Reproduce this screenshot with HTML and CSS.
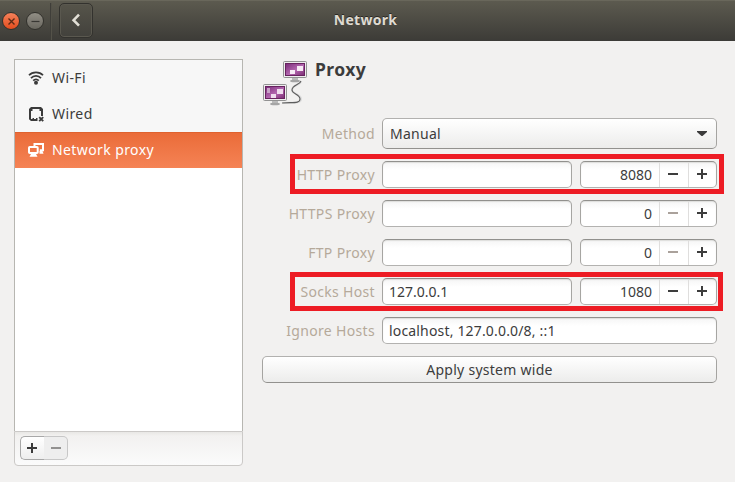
FILE: index.html
```html
<!DOCTYPE html>
<html lang="en">
<head>
<meta charset="utf-8">
<title>Network</title>
<link rel="stylesheet" href="styles.css">
</head>
<body>
<header class="titlebar">
  <div class="controls">
    <span class="wm close"><svg width="17" height="17" viewBox="0 0 17 17"><path d="M5.5 5.5l6 6m0-6l-6 6" stroke="#5b2a15" stroke-width="1.4"/></svg></span>
    <span class="wm minimize"><svg width="17" height="17" viewBox="0 0 17 17"><path d="M4.5 8.5h8" stroke="#383733" stroke-width="1.2"/></svg></span>
    <span class="divider"></span>
    <button class="back" aria-label="Back"><svg width="32" height="32" viewBox="0 0 32 32"><path d="M19 9.7l-5.4 5.5 5.4 5.5" fill="none" stroke="#e2dfd6" stroke-width="2.6"/></svg></button>
  </div>
  <h1>Network</h1>
</header>
<main class="content">
  <aside class="sidebar">
    <ul class="devices">
      <li><svg class="dev-icon" viewBox="0 0 16 16"><g fill="none" stroke="#3b3b3b" stroke-width="1.7"><path d="M1 5.3C4.5 1.3 11.5 1.3 15 5.3"/><path d="M3 8.1c2.7-3 7.3-3 10 0"/><path d="M5.2 10.6c1.7-1.7 3.9-1.7 5.6 0"/></g><circle cx="8" cy="12.8" r="2" fill="#3b3b3b"/></svg><span>Wi-Fi</span></li>
      <li><svg class="dev-icon" viewBox="0 0 16 16"><path d="M9.5 15H3L1 13.2V3L3 1h10l2 2v7h-2V5h-1.5V3h-7v2H3v8h1.5v-1H6v1h2v-1h1.5z" fill="#3b3b3b"/><path d="M11.2 11.2l4 4m0-4l-4 4" stroke="#3b3b3b" stroke-width="1.9"/></svg><span>Wired</span></li>
      <li class="selected"><svg class="dev-icon" viewBox="0 0 16 16"><path d="M6.5 4V2H15v6.3h-3.2" fill="none" stroke="#fff" stroke-width="2"/><path d="M11.5 9h3l1 2.7h-4z" fill="#fff"/><rect x="1" y="5" width="8.7" height="6" rx=".8" fill="none" stroke="#fff" stroke-width="2"/><path d="M3 12h5l1.5 2.7h-8z" fill="#fff"/></svg><span>Network proxy</span></li>
    </ul>
    <div class="toolbar">
      <div class="linked">
        <button class="add" aria-label="Add"><svg width="12" height="12" viewBox="0 0 12 12"><path d="M1 6h10M6 1v10" stroke="#3b3b3b" stroke-width="2"/></svg></button>
        <button class="remove" aria-label="Remove"><svg width="12" height="12" viewBox="0 0 12 12"><path d="M1 6h10" stroke="#929190" stroke-width="2"/></svg></button>
      </div>
    </div>
  </aside>
  <section class="panel">
    <div class="heading">
      <svg class="proxy-icon" width="48" height="48" viewBox="0 0 48 48">
        <defs><linearGradient id="screen" x1="0" y1="0" x2="1" y2="1"><stop offset="0" stop-color="#7a2b79"/><stop offset=".55" stop-color="#b468b0"/><stop offset="1" stop-color="#7b2a72"/></linearGradient></defs>
        <path d="M39 23c-1 3-9 3-9 8 0 4 9 4 9 9 0 5-8 3-18 4" fill="none" stroke="#ddd" stroke-width="2"/>
        <path d="M39 22c-1 4-9 4-9 9 0 4 8 4 8 9 0 5-8 3-18 4" fill="none" stroke="#5d5d5d" stroke-width="1.1"/>
        <g id="monitor"><path d="M30 18h6v3h-6z" fill="#bbb"/><ellipse cx="33" cy="22" rx="5" ry="1.3" fill="#a5a5a5"/><rect x="21.5" y="2.5" width="23" height="16" rx="1" fill="#eee" stroke="#929292"/><rect x="23.5" y="4.5" width="19" height="12" fill="url(#screen)" stroke="#68235f"/></g>
        <path d="M35 7h6v5h-6zM28 11h5v4h-5z" fill="#f7eaf5"/>
        <use href="#monitor" x="-20" y="23"/>
        <path d="M15 30h6v5h-6zM9 35h5v4H9z" fill="#efdcee"/><path d="M5 29h3v5H5z" fill="#c9a3c8"/>
      </svg>
      <h2>Proxy</h2>
    </div>
    <form class="settings">
      <div class="row method"><label>Method</label><div class="button combo"><span>Manual</span><svg width="10" height="5" viewBox="0 0 10 5"><path d="M0 0h10v1L5.5 5h-1L0 1z" fill="#3b3b3b"/></svg></div></div>
      <div class="row marked"><label>HTTP Proxy</label><div class="entry"></div><div class="entry spin"><span class="number">8080</span><span class="step minus"></span><span class="step plus"></span></div></div>
      <div class="row"><label>HTTPS Proxy</label><div class="entry"></div><div class="entry spin"><span class="number">0</span><span class="step minus off"></span><span class="step plus"></span></div></div>
      <div class="row"><label>FTP Proxy</label><div class="entry"></div><div class="entry spin"><span class="number">0</span><span class="step minus off"></span><span class="step plus"></span></div></div>
      <div class="row marked second"><label>Socks Host</label><div class="entry">127.0.0.1</div><div class="entry spin"><span class="number">1080</span><span class="step minus"></span><span class="step plus"></span></div></div>
      <div class="row"><label>Ignore Hosts</label><div class="entry wide">localhost, 127.0.0.0/8, ::1</div></div>
      <div class="button apply">Apply system wide</div>
    </form>
  </section>
</main>
</body>
</html>
```
FILE: styles.css
```css
*, *::before, *::after { box-sizing: border-box; }
body { margin: 0; width: 735px; height: 482px; overflow: hidden; background: #f2f1f0; color: #3c3c3c; font: 14px/20px "Noto Sans", "Open Sans", sans-serif; }
svg { display: block; flex: none; }
h1, h2, ul { margin: 0; padding: 0; }
button { padding: 0; margin: 0; }
.titlebar { height: 41px; display: grid; grid-template-columns: 1fr auto 1fr; align-items: center; background: linear-gradient(#5c5a4f, #3c3b37); border-top: 1px solid #69675b; }
.controls { display: flex; align-items: center; padding-left: 2px; height: 40px; }
.wm { width: 18px; height: 18px; border-radius: 50%; border: 1px solid #32312c; margin: 0 6px 1px 0; display: grid; place-items: center; }
.close { background: linear-gradient(#f5815a, #e34d1e); }
.minimize { background: linear-gradient(#918e85, #69675f); margin-right: 6px; }
.divider { width: 2px; height: 37px; border-left: 1px solid #3f3e39; border-right: 1px solid #545249; margin-right: 7px; }
.back { width: 34px; height: 35px; margin-bottom: 1px; background: linear-gradient(#56544a, #42413c); border: 1px solid #33322e; border-radius: 5px; box-shadow: inset 0 0 0 1px #5a584f; }
h1 { font-size: 14px; line-height: 20px; letter-spacing: .3px; color: #dfdbd2; text-shadow: 0 -1px #292824; margin: 0 4px 2px 0; }
.content { display: flex; height: 441px; padding: 18px 18px 0 14px; gap: 19px; }
.sidebar { width: 229px; height: 407px; display: flex; flex-direction: column; }
.devices { height: 372px; list-style: none; background: #fff; border: 1px solid #b7b6b1; border-bottom: 0; letter-spacing: .4px; }
.devices li { display: flex; align-items: center; height: 36px; padding-left: 13px; gap: 8px; background: #f7f7f7; }
.dev-icon { width: 16px; height: 16px; }
.devices .selected { background: linear-gradient(#ea6b38, #f58355); color: #fff; box-shadow: inset 0 1px #df622f; }
.toolbar { height: 35px; padding: 4px 5px; border: 1px solid #cbc9c7; border-radius: 0 0 4px 4px; background: linear-gradient(#e8e7e5, #f2f1f0 4px, #fbfbfb); }
.linked { display: flex; width: 48px; height: 24px; }
.linked button { width: 24px; border: 1px solid #a8a8a8; display: grid; place-items: center; }
.linked .add { background: linear-gradient(#fff, #eee); border-radius: 5px 0 0 5px; border-right: 0; padding-right: 1px; }
.linked .remove { background: #eee; border-color: #c7c7c7; border-radius: 0 5px 5px 0; border-left: 0; }
.panel { width: 455px; }
.heading { height: 59px; display: flex; gap: 5px; }
h2 { font-size: 17.5px; line-height: 20px; letter-spacing: .4px; }
.settings { display: flex; flex-direction: column; gap: 12px; }
.row { position: relative; display: grid; grid-template-columns: 112px 190px 137px; gap: 8px; height: 27px; }
.row.method { height: 31px; }
.row label { display: flex; justify-content: flex-end; align-items: center; color: #b5a99a; white-space: nowrap; margin-right: -1px; letter-spacing: .33px; }
.entry, .button { border: 1px solid #9d9c98; border-radius: 5px; height: 100%; display: flex; align-items: center; white-space: nowrap; }
.entry { background: linear-gradient(#f5f5f5, #fff 8px); border-color: #91908d #a6a5a2 #b3b2b0; box-shadow: inset 0 1px 1px #dededc; padding-left: 6px; }
.button { background: linear-gradient(#fff, #ececeb); border-color: #b2b1af #a5a4a1 #92918e; box-shadow: inset 0 1px #fff; letter-spacing: .27px; }
.combo { grid-column: 2 / 4; justify-content: space-between; padding: 0 9px 0 7px; }
.wide { grid-column: 2 / 4; letter-spacing: .17px; }
.settings .apply { height: 27px; justify-content: center; }
.entry.spin { padding: 0; }
.number { flex: 1; text-align: right; padding-right: 7px; }
.step { width: 29px; height: 25px; border-left: 1px solid #dfdedd; background: linear-gradient(#3d3d3d, #3d3d3d) 8px 11px / 10px 2px no-repeat; }
.step.off { background-image: linear-gradient(#aaa19b, #aaa19b); }
.plus { width: 28px; background: linear-gradient(#3d3d3d, #3d3d3d) 8px 11px / 10px 2px no-repeat, linear-gradient(#3d3d3d, #3d3d3d) 12px 7px / 2px 10px no-repeat; }
.marked::after { content: ""; position: absolute; left: 28px; top: -7px; width: 434px; height: 40px; border: 5px solid #ed1c24; }
.second::after { width: 433px; height: 39px; top: -6px; }
```
